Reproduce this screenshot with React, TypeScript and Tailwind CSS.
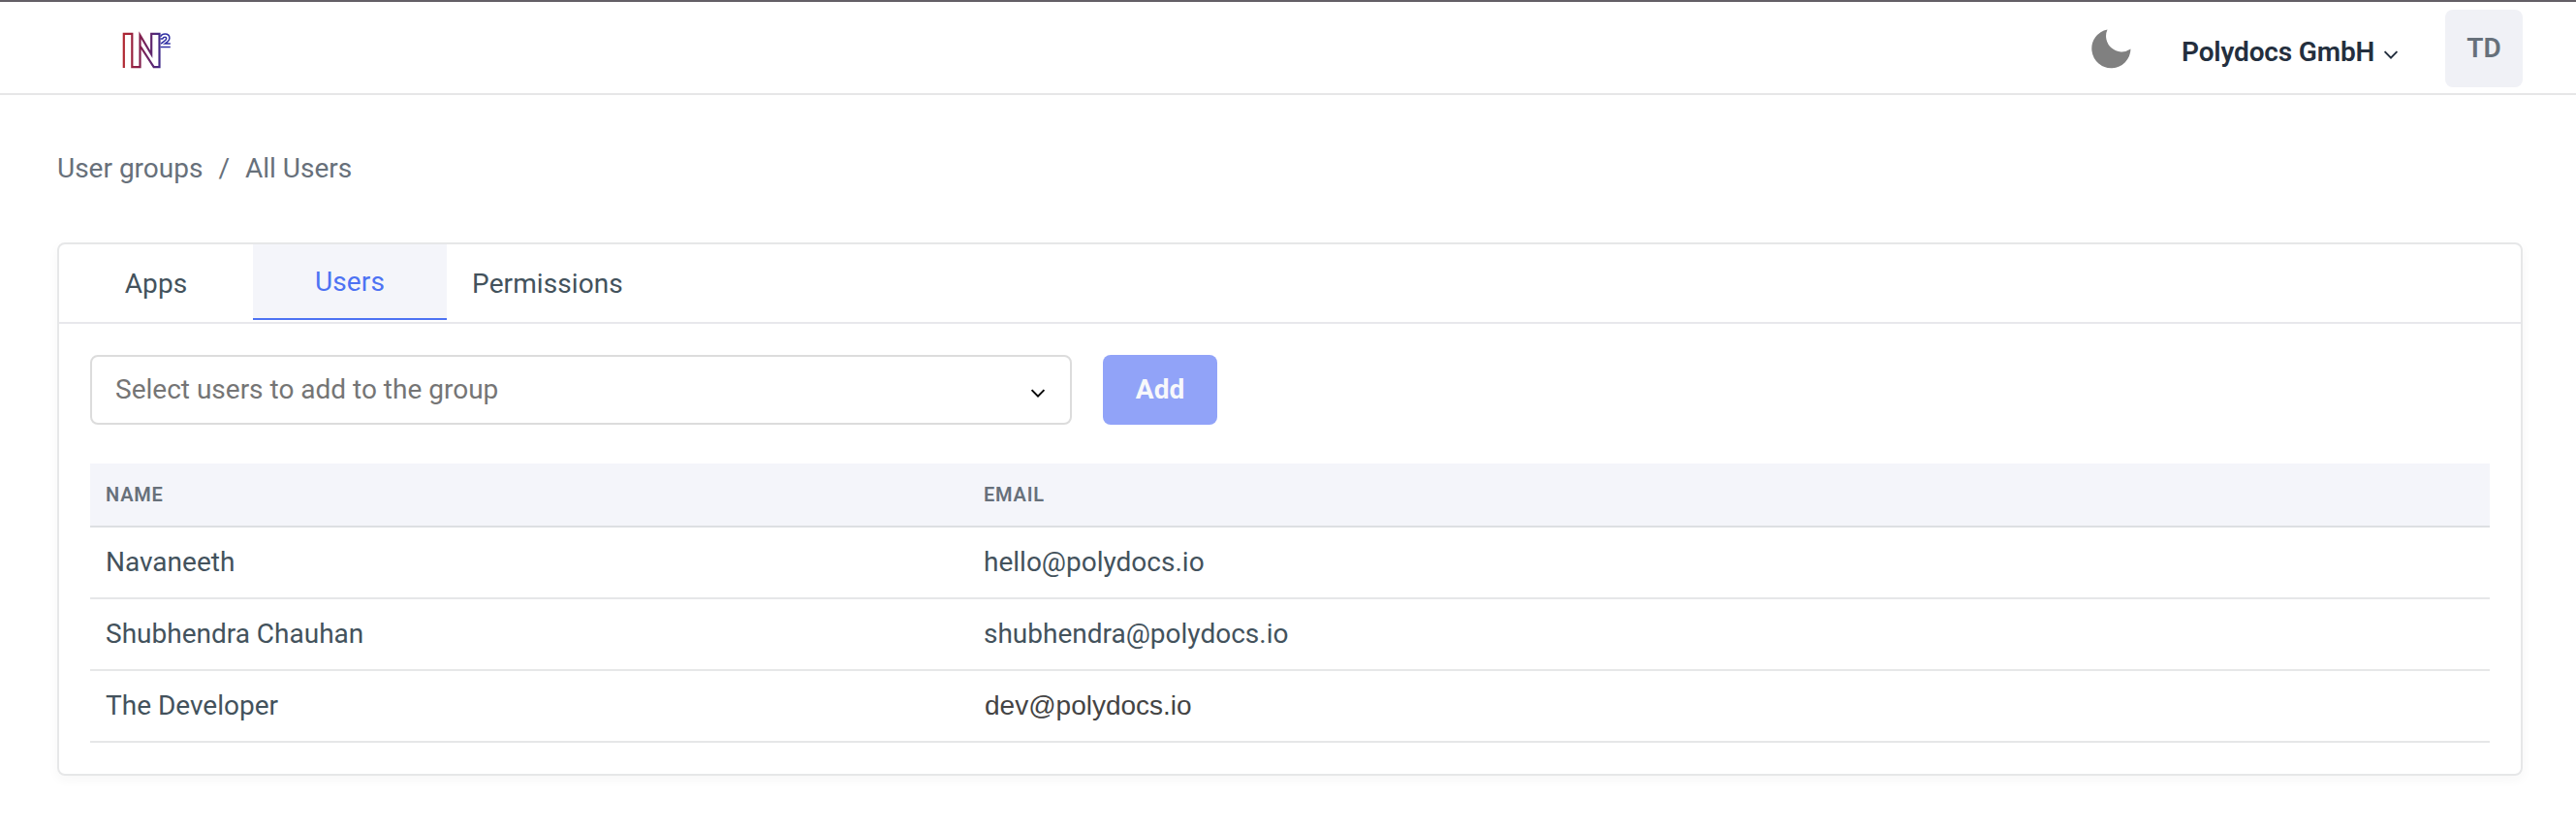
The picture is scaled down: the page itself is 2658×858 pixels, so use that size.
const users = [
  { name: "Navaneeth", email: "hello@polydocs.io" },
  { name: "Shubhendra Chauhan", email: "shubhendra@polydocs.io" },
  { name: "The Developer", email: "dev@polydocs.io", plain: true },
];

function Logo() {
  return (
    <svg width="52" height="40" viewBox="0 0 52 40" fill="none" aria-label="Logo">
      <defs>
        <linearGradient id="brand" gradientUnits="userSpaceOnUse" x1="1" y1="0" x2="50" y2="0">
          <stop offset="0" stopColor="#b5282f" />
          <stop offset="0.4" stopColor="#81204f" />
          <stop offset="0.75" stopColor="#4a2a80" />
          <stop offset="1" stopColor="#2a35b0" />
        </linearGradient>
      </defs>
      <path
        d="M2.8 38V2.9h8.5v34.2h8.2V4.2L31.2 24V2.9h8.3v34.2h-5.8L20 16"
        stroke="url(#brand)"
        strokeWidth="2.200"
      />
      <path
        d="M40.6 5.8C41.6 3.7 43.2 2.9 45.2 2.9c2.9 0 4.7 1.800 4.700 4.300 0 2.900-2.400 4.400-4.700 5.900h5.600M40.500 16.600h10.300M40.500 7.900h2.300c.5-1.100 1.300-1.600 2.300-1.600 1 0 1.600.6 1.600 1.500 0 1.600-3 2.900-5.600 5.300"
        stroke="#3030a4"
        strokeWidth="1.500"
      />
    </svg>
  );
}

function Chevron({ className }: { className: string }) {
  return (
    <svg width="16" height="12" viewBox="0 0 16 12" fill="none" className={className}>
      <path d="M1.6 2.1 8 8.6l6.4-6.5" stroke="currentColor" strokeWidth="2" />
    </svg>
  );
}

export default function App() {
  return (
    <div className="flex h-[858px] w-full flex-col overflow-hidden bg-white font-['Roboto',sans-serif] text-[28px] leading-8 text-[#43525c]">
      <header className="flex h-[98px] shrink-0 items-start border-t-2 border-b-2 border-t-[#635f66] border-b-[#e6e6e7] pr-[55px] pl-[125px]">
        <div className="mt-[30px]">
          <Logo />
        </div>
        <div className="ml-auto flex items-start">
          <svg width="41" height="41" viewBox="0 0 41 41" className="mt-[28px]">
            <path d="M16.5.4A20.1 20.1 0 1 0 40.5 20.6 16.3 16.3 0 0 1 16.5.4Z" fill="#808080" />
          </svg>
          <button className="mt-[36px] ml-[52px] flex items-center text-[#242f3e]">
            <span className="w-[199px] text-left font-semibold tracking-[-0.15px] whitespace-nowrap">Polydocs GmbH</span>
            <Chevron className="mt-[6px] ml-[9px]" />
          </button>
          <div className="mt-2 ml-[48px] flex h-20 w-20 items-center justify-center rounded-lg bg-[#f0f1f6] font-semibold text-[#67707a]">
            TD
          </div>
        </div>
      </header>

      <main className="flex flex-col pr-[55px] pl-[59px]">
        <nav className="mt-[60px] flex h-8 text-[#67707a]">
          <span>User groups</span>
          <span className="mx-4">/</span>
          <span>All Users</span>
        </nav>

        <section className="mt-[60px] flex h-[550px] flex-col rounded-lg border-2 border-[#e6e7e8] shadow-[0_4px_12px_rgba(40,60,60,0.04)]">
          <div className="flex h-[82px] shrink-0 border-b-2 border-[#e8e8ec] tracking-[0.1px]">
            <button className="h-20 w-[200px] pt-0.5">Apps</button>
            <button className="h-[78px] w-[200px] border-b-2 border-[#4d72f3] bg-[#f4f5fa] pt-0.5 text-[#4d72f3]">
              Users
            </button>
            <button className="h-20 w-[208px] pt-0.5">Permissions</button>
          </div>

          <div className="flex flex-col px-8 pt-8">
            <div className="flex gap-8">
              <div className="flex h-[72px] w-[1013px] items-center justify-between rounded-lg border-2 border-[#dcdcdc] pr-[25px] pl-6 text-[#757575]">
                <span>Select users to add to the group</span>
                <Chevron className="mt-[8px] text-black" />
              </div>
              <button className="h-[72px] w-[118px] rounded-lg bg-[#91a3f8] font-bold text-[#f7f8fb]">Add</button>
            </div>

            <table className="mt-10 w-full table-fixed border-separate border-spacing-0 text-left">
              <colgroup>
                <col className="w-[906px]" />
                <col />
              </colgroup>
              <thead>
                <tr className="h-[66px] bg-[#f4f5fa] text-[20px] tracking-[0.8px] text-[#67707a]">
                  <th className="border-b-2 border-[#dddfe2] px-4 py-0 font-semibold">NAME</th>
                  <th className="border-b-2 border-[#dddfe2] px-4 py-0 font-semibold">EMAIL</th>
                </tr>
              </thead>
              <tbody>
                {users.map((user) => (
                  <tr key={user.name} className="h-[74px]">
                    <td className="border-b-2 border-[#e6e7e8] px-4 py-0">{user.name}</td>
                    <td
                      className={
                        user.plain
                          ? "border-b-2 border-[#e6e7e8] py-0 pr-4 pl-[17px] font-['Liberation_Sans',sans-serif] text-[#444444]"
                          : "border-b-2 border-[#e6e7e8] px-4 py-0"
                      }
                    >
                      {user.email}
                    </td>
                  </tr>
                ))}
              </tbody>
            </table>
          </div>
        </section>
      </main>
    </div>
  );
}
